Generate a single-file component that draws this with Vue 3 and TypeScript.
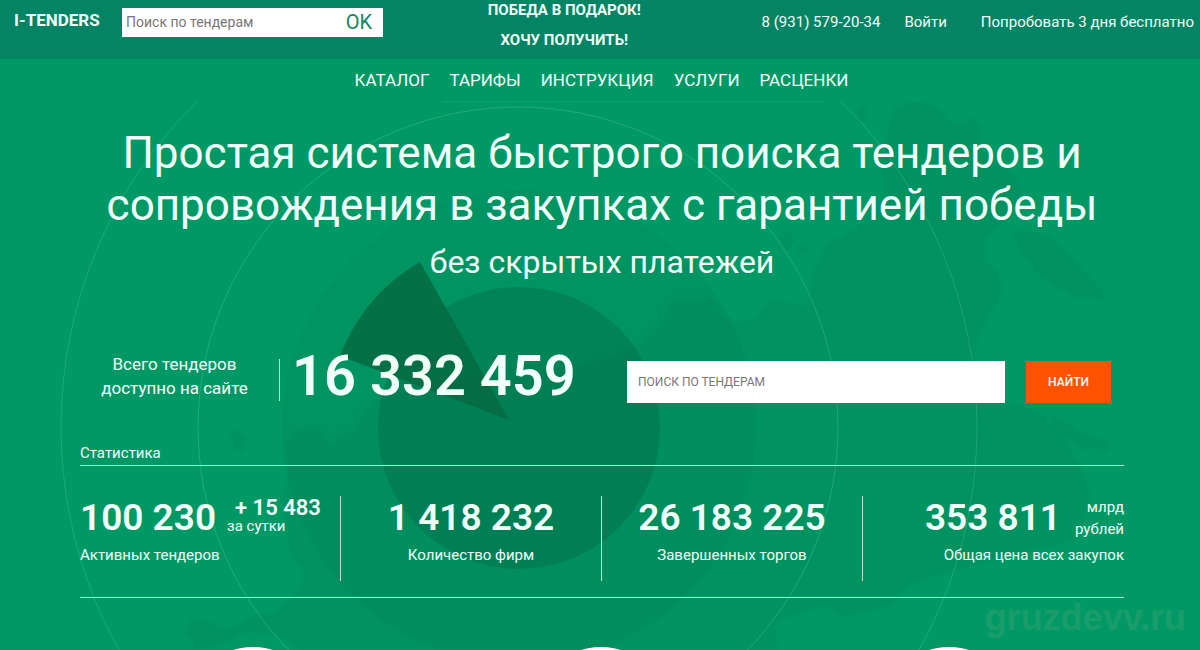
<script setup lang="ts">
import { ref } from 'vue'

interface Stat {
  value: string
  label: string
  kind: 'growth' | 'plain' | 'money'
}

const menu: string[] = ['КАТАЛОГ', 'ТАРИФЫ', 'ИНСТРУКЦИЯ', 'УСЛУГИ', 'РАСЦЕНКИ']
const stats: Stat[] = [
  { value: '100 230', label: 'Активных тендеров', kind: 'growth' },
  { value: '1 418 232', label: 'Количество фирм', kind: 'plain' },
  { value: '26 183 225', label: 'Завершенных торгов', kind: 'plain' },
  { value: '353 811', label: 'Общая цена всех закупок', kind: 'money' },
]
const quickQuery = ref('')
const query = ref('')
</script>

<template>
  <div class="page">
    <svg class="art" viewBox="0 0 1200 650" preserveAspectRatio="xMidYMin slice" aria-hidden="true">
      <defs>
        <clipPath id="below-menu"><rect x="0" y="101" width="1200" height="549" /></clipPath>
        <filter id="soften"><feGaussianBlur stdDeviation="2" /></filter>
      </defs>
      <g clip-path="url(#below-menu)">
        <g fill="#00724b" fill-opacity="0.2" filter="url(#soften)">
          <path d="M886 143L890 120L896 107L918 100L937 107L948 120L956 126L975 117L982 130L979 150L998 158L1016 178L1022 196L1004 222L985 238L986 262L999 273L1003 293L989 317L975 347L978 375L1005 400L1040 412L1062 436L1078 462L1088 484L1090 510L1072 540L1050 548L1022 552L996 560L970 566L950 572L929 577L905 588L893 605L866 612L840 616L826 604L808 612L782 618L774 628L780 650L300 650L288 640L270 634L245 632L222 645L196 650L184 632L192 618L210 622L228 630L250 618L276 612L292 596L306 575L290 555L286 528L283 500L288 470L283 448L294 430L318 428L330 444L352 430L372 400L430 380L520 372L600 360L634 347L652 330L676 300L714 297L722 312L734 323L758 317L772 297L807 307L813 273L827 243L855 230L872 208L886 193L880 168Z" />
          <path d="M1010 230L1044 233L1060 246L1075 260L1094 282L1110 300L1075 297L1044 280L1022 256Z" />
          <path d="M856 106l8-2 4 12-8 8zM780 234l10-4 4 12-6 8-8-4zM796 246l8-3 5 8-9 4zM230 432l9-4 8 12-4 12-9-3z" />
          <path d="M1050 414l18 10 20 12 22 4-4 14-12-6-10 2-16-12-14-10z" />
        </g>
        <circle cx="519" cy="427" r="237" fill="#007048" fill-opacity="0.12" />
        <circle cx="519" cy="428" r="141" fill="#006848" fill-opacity="0.4" />
        <path d="M509 420L420 262A181 181 0 0 0 340 356Z" fill="#046b44" fill-opacity="0.9" />
        <g fill="none" stroke="#4fbd8c" stroke-width="1">
          <circle cx="518" cy="427" r="320" stroke-opacity="0.45" />
          <circle cx="519" cy="427" r="458" stroke-opacity="0.38" />
        </g>
        <path d="M443 102H825" stroke="#4fbd8c" stroke-opacity="0.2" />
      </g>
    </svg>

    <header class="topbar">
      <a class="logo" href="#">I-TENDERS</a>
      <form class="quick" @submit.prevent>
        <input v-model="quickQuery" type="text" placeholder="Поиск по тендерам" aria-label="Поиск по тендерам" />
        <button type="submit">OK</button>
      </form>
      <div class="promo">
        <a href="#">ПОБЕДА В ПОДАРОК!</a>
        <a href="#">ХОЧУ ПОЛУЧИТЬ!</a>
      </div>
      <div class="account">
        <a href="tel:+79315792034">8 (931) 579-20-34</a>
        <a href="#">Войти</a>
        <a class="trial" href="#">Попробовать 3 дня бесплатно</a>
      </div>
    </header>

    <nav class="menu">
      <a v-for="item in menu" :key="item" href="#">{{ item }}</a>
    </nav>

    <main class="content">
      <h1>Простая система быстрого поиска тендеров и<br />сопровождения в закупках с гарантией победы</h1>
      <p class="subtitle">без скрытых платежей</p>

      <section class="lookup">
        <p class="caption">Всего тендеров<br />доступно на сайте</p>
        <span class="rule"></span>
        <strong class="total">16 332 459</strong>
        <form class="search" @submit.prevent>
          <input v-model="query" type="text" placeholder="ПОИСК ПО ТЕНДЕРАМ" aria-label="Поиск тендеров" />
          <button type="submit">НАЙТИ</button>
        </form>
      </section>

      <h2>Статистика</h2>
      <section class="stats">
        <div v-for="stat in stats" :key="stat.label" class="stat" :class="stat.kind">
          <div class="figure">
            <strong>{{ stat.value }}</strong>
            <span v-if="stat.kind === 'growth'" class="gain"><b>+ 15 483</b><span>за сутки</span></span>
            <span v-if="stat.kind === 'money'" class="unit">млрд<br />рублей</span>
          </div>
          <div class="label">{{ stat.label }}</div>
        </div>
      </section>
    </main>

    <div class="features">
      <span v-for="n in 3" :key="n" class="disc"></span>
    </div>
    <span class="mark">gruzdevv.ru</span>
  </div>
</template>

<style>
body {
  margin: 0;
}
</style>

<style scoped>
.page {
  position: relative;
  display: flex;
  flex-direction: column;
  height: 100vh;
  min-height: 650px;
  overflow: hidden;
  background: #009966;
  color: #f0fff8;
  font-family: Roboto, "Noto Sans", sans-serif;
  font-size: 16px;
}
.page * {
  box-sizing: border-box;
}
.art {
  position: absolute;
  inset: 0;
  width: 100%;
  height: 100%;
}
.topbar,
.menu,
.content,
.features {
  position: relative;
}
a {
  color: inherit;
  text-decoration: none;
}
input,
button {
  border: 0;
  border-radius: 0;
  font-family: inherit;
}
input {
  min-width: 0;
  color: #333;
  background: #fff;
}
input::placeholder {
  color: #777;
  opacity: 1;
}
.topbar {
  display: flex;
  align-items: flex-start;
  height: 59px;
  padding: 0 6px 0 14px;
  background: #038464;
}
.logo {
  width: 108px;
  margin-top: 10px;
  font-size: 17px;
  font-weight: 700;
  line-height: 20px;
}
.quick {
  display: flex;
  width: 261px;
  height: 29px;
  margin-top: 8px;
  background: #fff;
}
.quick input {
  flex: 1;
  padding: 0 4px 2px;
  font-size: 14px;
}
.quick button {
  width: 48px;
  padding: 0 0 2px;
  background: #fff;
  color: #12875f;
  font-size: 20px;
}
.promo {
  display: flex;
  flex: 1;
  flex-direction: column;
  gap: 12px;
  align-items: center;
  padding: 1px 16px 0 0;
  font-size: 15px;
  font-weight: 700;
  line-height: 18px;
}
.account {
  display: flex;
  gap: 24px;
  margin-top: 12px;
  font-size: 15px;
  line-height: 20px;
}
.trial {
  margin-left: 10px;
}
.menu {
  display: flex;
  justify-content: center;
  gap: 20px;
  height: 42px;
  padding-left: 3px;
  font-size: 17px;
  line-height: 42px;
}
.content {
  padding: 26px 76px 0 80px;
}
h1 {
  margin: 0;
  font-size: 44px;
  font-weight: 400;
  line-height: 52px;
  text-align: center;
  white-space: nowrap;
}
.subtitle {
  margin: 11px 0 0;
  font-size: 32px;
  line-height: 40px;
  text-align: center;
}
.lookup {
  display: flex;
  align-items: center;
  height: 60px;
  margin-top: 70px;
}
.caption {
  width: 199px;
  margin: 0 0 12px;
  padding-right: 10px;
  font-size: 17px;
  line-height: 24px;
  text-align: center;
}
.rule {
  width: 1px;
  height: 42px;
  margin-bottom: 4px;
  background: #b8e4d1;
}
.total {
  width: 347px;
  margin-bottom: 12px;
  padding-left: 12px;
  font-size: 56px;
  font-weight: 600;
  line-height: 60px;
}
.search {
  display: flex;
  flex: 1;
  gap: 21px;
  padding-right: 13px;
}
.search input {
  flex: 1;
  height: 42px;
  padding: 0 11px;
  font-size: 12px;
}
.search button {
  width: 85px;
  height: 42px;
  background: #ff5200;
  color: #fff;
  font-size: 12px;
  font-weight: 500;
}
h2 {
  margin: 31px 0 0;
  padding-bottom: 2px;
  border-bottom: 1px solid #b8e4d1;
  font-size: 15px;
  font-weight: 400;
  line-height: 20px;
}
.stats {
  display: grid;
  grid-template-columns: repeat(4, 1fr);
  padding: 30px 0 16px;
  border-bottom: 1px solid #b8e4d1;
}
.stat {
  height: 85px;
  border-right: 1px solid #b8e4d1;
  text-align: center;
}
.figure {
  display: flex;
  justify-content: center;
  height: 42px;
}
.figure strong {
  font-size: 37px;
  font-weight: 600;
  line-height: 44px;
}
.label {
  margin-top: 7px;
  font-size: 15px;
  line-height: 20px;
}
.growth {
  text-align: left;
}
.growth .figure {
  justify-content: flex-start;
}
.gain {
  display: flex;
  flex-direction: column;
  margin-left: 11px;
  padding-top: 2px;
  font-size: 15px;
  line-height: 16px;
}
.gain b {
  padding-left: 8px;
  font-size: 22px;
  font-weight: 600;
  line-height: 20px;
}
.money {
  border-right: 0;
  text-align: right;
}
.money .figure {
  justify-content: flex-end;
}
.unit {
  margin-left: 14px;
  font-size: 15px;
  line-height: 22px;
}
.features {
  display: flex;
  flex: 1 1 0;
  justify-content: center;
  gap: 216px;
  min-height: 0;
  padding: 49px 0 0 2px;
  overflow: hidden;
}
.disc {
  flex: none;
  width: 132px;
  height: 132px;
  border-radius: 50%;
  background: #fff;
}
.mark {
  position: absolute;
  right: 14px;
  bottom: 12px;
  color: #1a9c6c;
  font-family: "Liberation Sans", sans-serif;
  font-size: 36px;
  font-weight: 700;
  line-height: 40px;
}
</style>
